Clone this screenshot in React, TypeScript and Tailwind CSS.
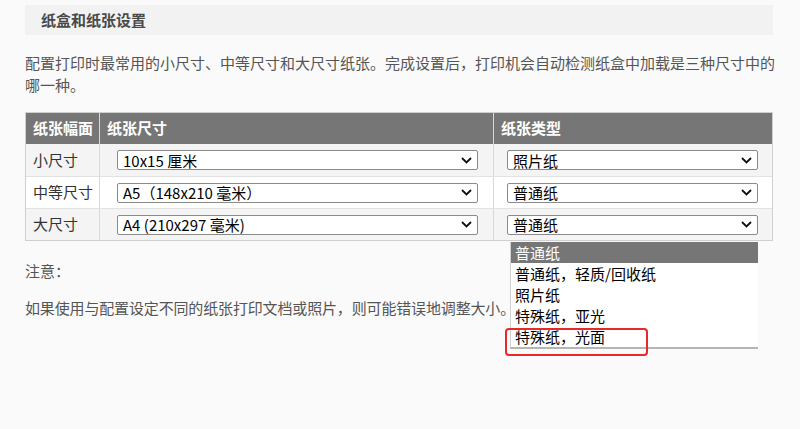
import React from 'react';

const cjk = "'Noto Sans CJK SC', 'Noto Sans', sans-serif";

function Chevron() {
  return (
    <svg width="11" height="7" viewBox="0 0 11 7" className="shrink-0">
      <path d="M1 1l4.5 4.5L10 1" fill="none" stroke="#111" strokeWidth="1.8" />
    </svg>
  );
}

function FakeSelect({ value, className }: { value: string; className: string }) {
  return (
    <div
      className={`h-[20px] flex items-center justify-between bg-white border border-[#8a8a8a] rounded-[2px] pl-[5px] pr-[5px] text-[15px] text-black ${className}`}
    >
      <span className="leading-none">{value}</span>
      <Chevron />
    </div>
  );
}

const rows = [
  { label: '小尺寸', size: '10x15 厘米', type: '照片纸', bg: 'bg-[#f4f4f4]' },
  { label: '中等尺寸', size: 'A5（148x210 毫米）', type: '普通纸', bg: 'bg-white' },
  { label: '大尺寸', size: 'A4 (210x297 毫米)', type: '普通纸', bg: 'bg-[#f4f4f4]' },
];

const options = ['普通纸', '普通纸，轻质/回收纸', '照片纸', '特殊纸，亚光', '特殊纸，光面'];

export default function App() {
  return (
    <div className="relative w-[800px] h-[429px] bg-[#fafafa] overflow-hidden" style={{ fontFamily: cjk }}>
      <div className="pl-[25px] w-[773px]">
        <div className="mt-[5px] h-[30px] bg-[#f2f2f2] flex items-center pl-[16px]">
          <h2 className="text-[15px] font-bold text-[#4a4a4a]">纸盒和纸张设置</h2>
        </div>

        <p className="mt-[17px] w-[752px] text-[15px] leading-[22px] text-[#555]">
          配置打印时最常用的小尺寸、中等尺寸和大尺寸纸张。完成设置后，打印机会自动检测纸盒中加载是三种尺寸中的哪一种。
        </p>

        <div className="mt-[16px] w-[748px] border border-[#cfcfcf]">
          <div className="flex h-[31px] bg-[#767676] text-white font-bold text-[15px]">
            <div className="w-[74px] flex items-center pl-[7px] border-r border-[#d8d8d8]">纸张幅面</div>
            <div className="w-[394px] flex items-center pl-[7px] border-r border-[#d8d8d8]">纸张尺寸</div>
            <div className="flex-1 flex items-center pl-[7px]">纸张类型</div>
          </div>
          {rows.map((r, i) => (
            <div
              key={r.label}
              className={`flex h-[32px] text-[15px] text-[#333] ${r.bg} ${i > 0 ? 'border-t border-[#e2e2e2]' : ''}`}
            >
              <div className="w-[74px] flex items-center pl-[7px] border-r border-[#d8d8d8]">{r.label}</div>
              <div className="w-[394px] flex items-center pl-[17px] border-r border-[#d8d8d8]">
                <FakeSelect value={r.size} className="w-[361px] text-[14px]" />
              </div>
              <div className="flex-1 flex items-center pl-[13px]">
                <FakeSelect value={r.type} className="w-[251px]" />
              </div>
            </div>
          ))}
        </div>

        <p className="mt-[19px] text-[15px] leading-[22px] text-[#555]">注意：</p>
        <p className="mt-[15px] text-[15px] leading-[22px] text-[#555] tracking-[-0.15px]">
          如果使用与配置设定不同的纸张打印文档或照片，则可能错误地调整大小。
        </p>
      </div>

      {/* open dropdown list */}
      <div className="absolute left-[510px] top-[242px] w-[248px] bg-white border-l border-[#d0d0d0] border-b-2 border-b-[#b5b5b5] text-[15px] text-black">
        {options.map((o, i) => (
          <div
            key={o}
            className={`h-[21px] leading-[21px] pl-[4px] ${i === 0 ? 'bg-[#767676] text-white' : ''}`}
          >
            {o}
          </div>
        ))}
      </div>

      {/* highlight box */}
      <div className="absolute left-[505px] top-[328px] w-[143px] h-[28px] border-2 border-[#e8282b] rounded-[4px]" />
    </div>
  );
}
